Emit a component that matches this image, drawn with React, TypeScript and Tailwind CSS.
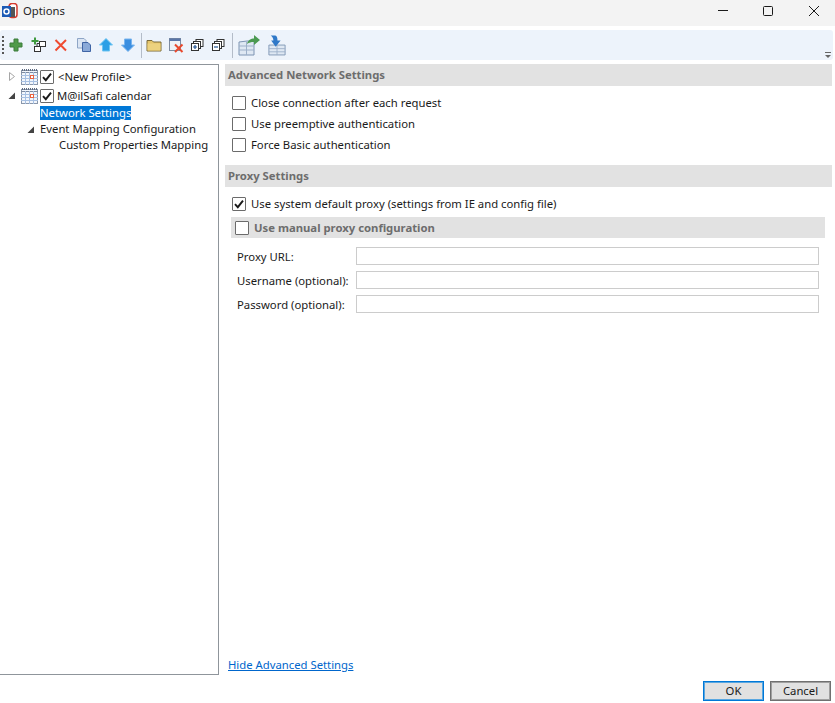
import React from "react";

const font = "font-['Noto_Sans','Open_Sans',sans-serif]";

function Check({ checked = false, cls = "" }: { checked?: boolean; cls?: string }) {
  return (
    <span className={`w-[14px] h-[14px] shrink-0 border border-[#6b6b6b] rounded-[1px] bg-white flex items-center justify-center ${cls}`}>
      {checked && (
        <svg width="12" height="12" viewBox="0 0 12 12">
          <path d="M2 6.2 L4.8 9.2 L10 2.6" fill="none" stroke="#1a1a1a" strokeWidth="1.9" />
        </svg>
      )}
    </span>
  );
}

function CalIcon() {
  return (
    <svg width="17" height="16" viewBox="0 0 17 16" className="shrink-0">
      <rect x="0.5" y="1.5" width="16" height="14" fill="#f2f6fc" stroke="#8a97ab" />
      <path d="M1 1H16" stroke="#5f6b80" strokeWidth="2" strokeDasharray="1 1" />
      <path d="M0 3.5H17" stroke="#7d8ba0" />
      <path d="M0 6.5H17M0 9.5H17M0 12.5H17M4.5 3V16M8.5 3V16M12.5 3V16" stroke="#a7c0e2" strokeWidth="1" />
      <rect x="9.500" y="6.500" width="3" height="3" fill="#fff" stroke="#e8623f" />
    </svg>
  );
}

function Expander({ open = false }: { open?: boolean }) {
  return (
    <svg width="8" height="9" viewBox="0 0 8 9" className="shrink-0">
      {open ? <path d="M7 1.5V8H0.5Z" fill="#444444" /> : <path d="M1.5 0.5L6.5 4.5L1.5 8.5Z" fill="#ffffff" stroke="#a6a6a6" />}
    </svg>
  );
}

function Header({ children }: { children: React.ReactNode }) {
  return (
    <div className="h-[22px] bg-[#e2e2e2] pl-[3px] flex items-center font-bold text-[#6d6d6d]">{children}</div>
  );
}

function CheckRow({ label, checked = false }: { label: string; checked?: boolean }) {
  return (
    <div className="flex items-center gap-[5px] pl-[7px] h-[21px]">
      <Check checked={checked} />
      <span>{label}</span>
    </div>
  );
}

function Field({ label }: { label: string }) {
  return (
    <div className="flex items-center h-[18px] mb-[6px]">
      <span className="w-[119px] shrink-0 whitespace-nowrap pt-[2px]">{label}</span>
      <div className="h-[18px] w-[463px] border border-[#cccccc] bg-white" />
    </div>
  );
}

const Sep = () => <div className="w-px h-[25px] bg-[#b4bcc8] shrink-0" />;

const I = ({ children, w = 16, cls = "" }: { children: React.ReactNode; w?: number; cls?: string }) => (
  <svg width={w} height="16" viewBox={`0 0 ${w} 16`} className={`shrink-0 ${cls}`}>{children}</svg>
);

function Toolbar() {
  const stack = (sign: string) => (
    <I w={14}>
      <rect x="6" y="2.5" width="7" height="7" fill="#fff" stroke="#333" />
      <rect x="3.5" y="4.5" width="7" height="7" fill="#fff" stroke="#333" />
      <rect x="1.5" y="6.5" width="7" height="7" fill="#fff" stroke="#333" />
      <path d={sign} stroke="#1c4f8f" strokeWidth="1.2" />
    </I>
  );
  return (
    <div className="h-[30px] w-[833px] bg-[#edf3fb] rounded-[3px] flex items-center relative">
      <div className="ml-[2px] mr-[4px] flex flex-col gap-[2px]">
        {[0, 1, 2, 3, 4].map((i) => <div key={i} className="w-[2px] h-[2px] bg-[#555555]" />)}
      </div>
      <div className="flex items-center gap-[6px]">
        <I><path d="M6 2H10V6H14V10H10V14H6V10H2V6H6Z" fill="#4f9a4a" stroke="#3c7c3a" /></I>
        <I cls="ml-[1px]">
          <path d="M3 0.5H5V3H7.5V5H5V7.5H3V5H0.5V3H3Z" fill="#3f9a3f" />
          <rect x="8.5" y="4.5" width="6" height="5" fill="#fff" stroke="#333" />
          <rect x="3.5" y="9.5" width="6" height="5" fill="#fff" stroke="#333" />
          <path d="M6 9V6.5H9" stroke="#333" fill="none" />
        </I>
        <I><path d="M2.5 3L13 13.5M13 3L2.5 13.5" stroke="#ef4a30" strokeWidth="2" /></I>
        <I cls="ml-[1px]">
          <path d="M1.5 1.5H8L10 3.5V11H1.5Z" fill="#dbe5f3" stroke="#8ea5c6" />
          <path d="M6.5 5.5H12L14.5 8V14.5H6.5Z" fill="#8aa9d8" stroke="#3f64a5" />
        </I>
        <I><path d="M8 1.5L14.5 8H11.500V14H4.500V8H1.5Z" fill="#2b9fe6" stroke="#6cc4f2" /></I>
        <I><path d="M8 14.5L14.5 8H11.500V2H4.500V8H1.5Z" fill="#3b8ee0" stroke="#7ab5ee" /></I>
      </div>
      <span className="w-[5px]" />
      <Sep />
      <span className="w-[4px]" />
      <div className="flex items-center gap-[6px]">
        <I><path d="M1 3.5H6L7.5 5H15V14H1Z" fill="#e6c66c" stroke="#7a6a3a" /><rect x="1.5" y="6.5" width="13" height="7" fill="#edd27f" /></I>
        <I>
          <rect x="1.5" y="1.5" width="11" height="12" fill="#eef2f8" stroke="#7d8ba0" />
          <rect x="1.5" y="1.5" width="11" height="2.5" fill="#5a76a8" />
          <path d="M7 7.5L14.5 15M14.5 7.5L7 15" stroke="#e8492e" strokeWidth="2" />
        </I>
        {stack("M3 10H7M5 8V12")}
        <span className="ml-[1px]">{stack("M3 10H7")}</span>
      </div>
      <span className="w-[7px]" />
      <Sep />
      <div className="flex items-center gap-[7px] ml-[5px]">
        <svg width="23" height="22" viewBox="0 0 23 22" className="shrink-0">
          <path d="M1 8L9 7H16V21H1Z" fill="#dfe8f3" stroke="#7d94b3" />
          <path d="M1 12H16M1 16H16M8.5 8V21" stroke="#9db0c9" />
          <path d="M9 10C10 6 13 4.5 16 4.5V1L22 6L16 11V8C13 8 11 8.5 9 10Z" fill="#4c9a52" />
        </svg>
        <svg width="18" height="23" viewBox="0 0 20 23" className="shrink-0">
          <path d="M1 11H19V22H1Z" fill="#dfe8f3" stroke="#7d94b3" />
          <path d="M1 15H19M1 18.500H19M10 11V22" stroke="#9db0c9" />
          <path d="M3 0.500H8C10 1 10.500 3 10.500 6H14L8.500 13L3.500 6H6C6 4 5 2 3 0.500Z" fill="#2f78c8" />
        </svg>
      </div>
      <svg width="8" height="8" viewBox="0 0 8 8" className="absolute right-[1px] bottom-[1px]">
        <path d="M1 1.500H7" stroke="#666" />
        <path d="M1 4H7L4 7Z" fill="#666" />
      </svg>
    </div>
  );
}

export default function App() {
  return (
    <div className={`w-[835px] h-[703px] bg-white overflow-hidden flex flex-col text-[11.3px] leading-[16px] text-[#1a1a1a] ${font}`}>
      <div className="h-[26px] bg-[#f3f3f3] flex items-center shrink-0 pb-[4px]">
        <svg width="16" height="17" viewBox="0 0 16 17" className="ml-[2px] shrink-0">
          <rect x="7" y="0.500" width="8" height="14" rx="3" fill="#fff" stroke="#d43a2e" strokeWidth="1.500" />
          <rect x="9" y="4" width="4" height="10" fill="#555" />
          <rect x="0" y="3" width="9" height="11" fill="#1d5bb5" />
          <circle cx="4.500" cy="8.500" r="2.500" fill="none" stroke="#fff" strokeWidth="1.500" />
        </svg>
        <span className="ml-[5px] text-[#1f1f1f]">Options</span>
        <div className="ml-auto flex items-center">
          <svg width="12" height="12" viewBox="0 0 12 12" className="mr-[33px]"><path d="M1 5.500H11" stroke="#1a1a1a" /></svg>
          <svg width="12" height="12" viewBox="0 0 12 12" className="mr-[34px]"><rect x="1.500" y="1.500" width="9" height="9" rx="1" fill="none" stroke="#1a1a1a" /></svg>
          <svg width="12" height="12" viewBox="0 0 12 12" className="mr-[15px]"><path d="M1 1L11 11M11 1L1 11" stroke="#1a1a1a" /></svg>
        </div>
      </div>
      <div className="pt-[4px] shrink-0"><Toolbar /></div>
      <div className="flex pt-[4px] h-[615px] shrink-0">
        <div className="w-[219px] h-[611px] border-t border-r border-b border-[#8f959b] shrink-0 pt-[2px] pl-[8px]">
          <div className="flex items-center h-[19px]">
            <Expander /><span className="w-[5px]" /><CalIcon />
            <Check checked cls="ml-[2px]" /><span className="ml-[4px]">&lt;New Profile&gt;</span>
          </div>
          <div className="flex items-center h-[19px]">
            <Expander open /><span className="w-[5px]" /><CalIcon />
            <Check checked cls="ml-[2px]" /><span className="ml-[3px]">M@ilSafi calendar</span>
          </div>
          <div className="flex h-[16px] pl-[32px] pt-[1px]">
            <span className="bg-[#0078d7] text-white h-[14px] leading-[14px]">Network Settings</span>
          </div>
          <div className="flex items-center h-[16px] pl-[19px]">
            <Expander open /><span className="ml-[5px]">Event Mapping Configuration</span>
          </div>
          <div className="h-[16px] pl-[51px] whitespace-nowrap">Custom Properties Mapping</div>
        </div>
        <div className="flex-1 min-w-0 pl-[6px] pr-[3px] flex flex-col">
          <Header>Advanced Network Settings</Header>
          <div className="pt-[6px] pb-[10px]">
            <CheckRow label="Close connection after each request" />
            <CheckRow label="Use preemptive authentication" />
            <CheckRow label="Force Basic authentication" />
          </div>
          <Header>Proxy Settings</Header>
          <div className="pt-[6px]"><CheckRow checked label="Use system default proxy (settings from IE and config file)" /></div>
          <div className="ml-[6px] mr-[7px] mt-[3px] h-[21px] bg-[#e2e2e2] flex items-center gap-[5px] pl-[4px] font-bold text-[#6d6d6d]">
            <Check />
            <span>Use manual proxy configuration</span>
          </div>
          <div className="pl-[12px] pt-[9px]">
            <Field label="Proxy URL:" />
            <Field label="Username (optional):" />
            <Field label="Password (optional):" />
          </div>
          <div className="mt-auto pl-[3px] pb-[2px]">
            <a className="text-[#0066cc] underline">Hide Advanced Settings</a>
          </div>
        </div>
      </div>
      <div className="flex justify-end gap-[6px] pr-[4px] pt-[6px]">
        <button className="w-[61px] h-[20px] bg-[#e1e1e1] border border-[#0078d7] shadow-[inset_0_0_0_1px_#5aa7e0] flex items-center justify-center">OK</button>
        <button className="w-[61px] h-[20px] bg-[#e1e1e1] border border-[#707070] shadow-[inset_0_0_0_1px_#a0a0a0] flex items-center justify-center">Cancel</button>
      </div>
    </div>
  );
}
